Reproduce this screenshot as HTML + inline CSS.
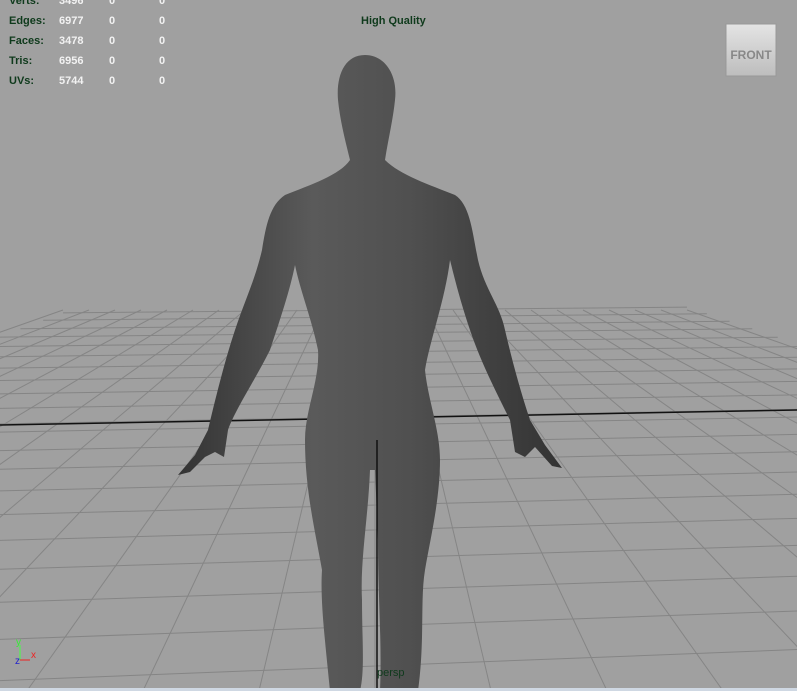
<!DOCTYPE html>
<html><head><style>
body{margin:0;width:797px;height:691px;overflow:hidden;background:#a0a0a0;font-family:"Liberation Sans",sans-serif;position:relative}
.t{position:absolute;font-size:11px;font-weight:bold}
.g{color:#0f3a1c}.w{color:#f2f2f2}
</style></head><body>
<svg width="797" height="691" style="position:absolute;left:0;top:0">
<defs>
<linearGradient id="bd" x1="0" x2="1" y1="0" y2="0">
<stop offset="0" stop-color="#333"/><stop offset="0.35" stop-color="#5a5a5a"/><stop offset="0.6" stop-color="#505050"/><stop offset="1" stop-color="#333"/>
</linearGradient>
<linearGradient id="cb" x1="0" x2="0" y1="0" y2="1"><stop offset="0" stop-color="#e4e4e4"/><stop offset="1" stop-color="#bdbdbd"/></linearGradient>
</defs>
<g stroke="#858585" stroke-width="1" fill="none" id="grid"></g>
<line x1="0" y1="425" x2="797" y2="410" stroke="#111" stroke-width="1.5"/>
<path fill="url(#bd)" d="M365,55 C385,55 398,75 395,100 C393,120 388,140 385,160 C400,175 430,185 455,195 C470,205 472,230 478,260 C485,290 500,305 505,330 C512,360 520,390 530,420 L545,445 L562,468 L552,466 L535,447 L525,457 L515,452 L510,420 C495,390 480,360 470,330 C460,300 455,280 450,260 C445,300 430,340 425,370 C428,400 440,430 440,460 C440,500 430,540 425,570 C420,600 425,640 418,691 L380,691 C382,640 378,600 378,540 L375,470 L370,470 C368,520 360,560 362,600 C362,640 365,670 360,691 L330,691 C325,640 320,600 322,570 C315,530 305,490 305,440 C305,410 320,380 318,350 C312,320 300,290 295,265 C290,290 280,320 270,350 C255,380 235,410 228,430 L224,457 L215,452 L205,457 L190,472 L178,475 L195,455 L208,430 C215,400 225,360 235,330 C245,300 255,280 262,250 C266,225 270,205 285,195 C310,185 340,175 350,160 C345,140 340,120 338,100 C336,75 345,55 365,55 Z"/>
<line x1="377" y1="440" x2="377" y2="691" stroke="#111" stroke-width="1.5"/>
<rect x="726" y="24" width="50" height="52" fill="url(#cb)" stroke="#999"/>
<text x="751" y="59" font-family="Liberation Sans" font-size="12" font-weight="bold" fill="#888" text-anchor="middle">FRONT</text>
<line x1="20" y1="660" x2="20" y2="645" stroke="#4f4"/>
<line x1="20" y1="660" x2="30" y2="660" stroke="#e22"/>
<text x="16" y="645" font-size="10" fill="#3e3" font-family="Liberation Sans">y</text>
<text x="31" y="658" font-size="10" fill="#e22" font-family="Liberation Sans">x</text>
<text x="15" y="664" font-size="10" fill="#22c" font-family="Liberation Sans">z</text>
<rect x="0" y="688" width="797" height="3" fill="#cfd8e3"/>
</svg>
<div class="t g" style="left:9px;top:-5px">Verts:</div><div class="t w" style="left:59px;top:-5px">3496</div><div class="t w" style="left:109px;top:-5px">0</div><div class="t w" style="left:159px;top:-5px">0</div>
<div class="t g" style="left:9px;top:15px">Edges:</div><div class="t w" style="left:59px;top:15px">6977</div><div class="t w" style="left:109px;top:15px">0</div><div class="t w" style="left:159px;top:15px">0</div>
<div class="t g" style="left:9px;top:35px">Faces:</div><div class="t w" style="left:59px;top:35px">3478</div><div class="t w" style="left:109px;top:35px">0</div><div class="t w" style="left:159px;top:35px">0</div>
<div class="t g" style="left:9px;top:55px">Tris:</div><div class="t w" style="left:59px;top:55px">6956</div><div class="t w" style="left:109px;top:55px">0</div><div class="t w" style="left:159px;top:55px">0</div>
<div class="t g" style="left:9px;top:75px">UVs:</div><div class="t w" style="left:59px;top:75px">5744</div><div class="t w" style="left:109px;top:75px">0</div><div class="t w" style="left:159px;top:75px">0</div>
<div class="t g" style="left:361px;top:15px">High Quality</div>
<div class="t g" style="left:377px;top:667px;font-weight:normal">persp</div>
<script>
(function(){
var g=document.getElementById('grid'),ns='http://www.w3.org/2000/svg',vx=375,vy=200,ty=310;
function L(a,b,c,d){var l=document.createElementNS(ns,'line');l.setAttribute('x1',a);l.setAttribute('y1',b);l.setAttribute('x2',c);l.setAttribute('y2',d);g.appendChild(l);}
var s=(691-vy)/(ty-vy);
for(var i=-12;i<=12;i++){L(vx+i*26,ty,vx+i*26*s,691);}
var ys=[310,317,325,333,342,352,363,375,388,402,417,425,443,461,482,505,530,558,590,626,666];
for(var j=0;j<ys.length;j++){var y=ys[j],d=y-vy,hw=312*d/110,t=7.5*d/225*(hw/398);L(vx-hw,y+t,vx+hw,y-t);}
})();
</script>
</body></html>
